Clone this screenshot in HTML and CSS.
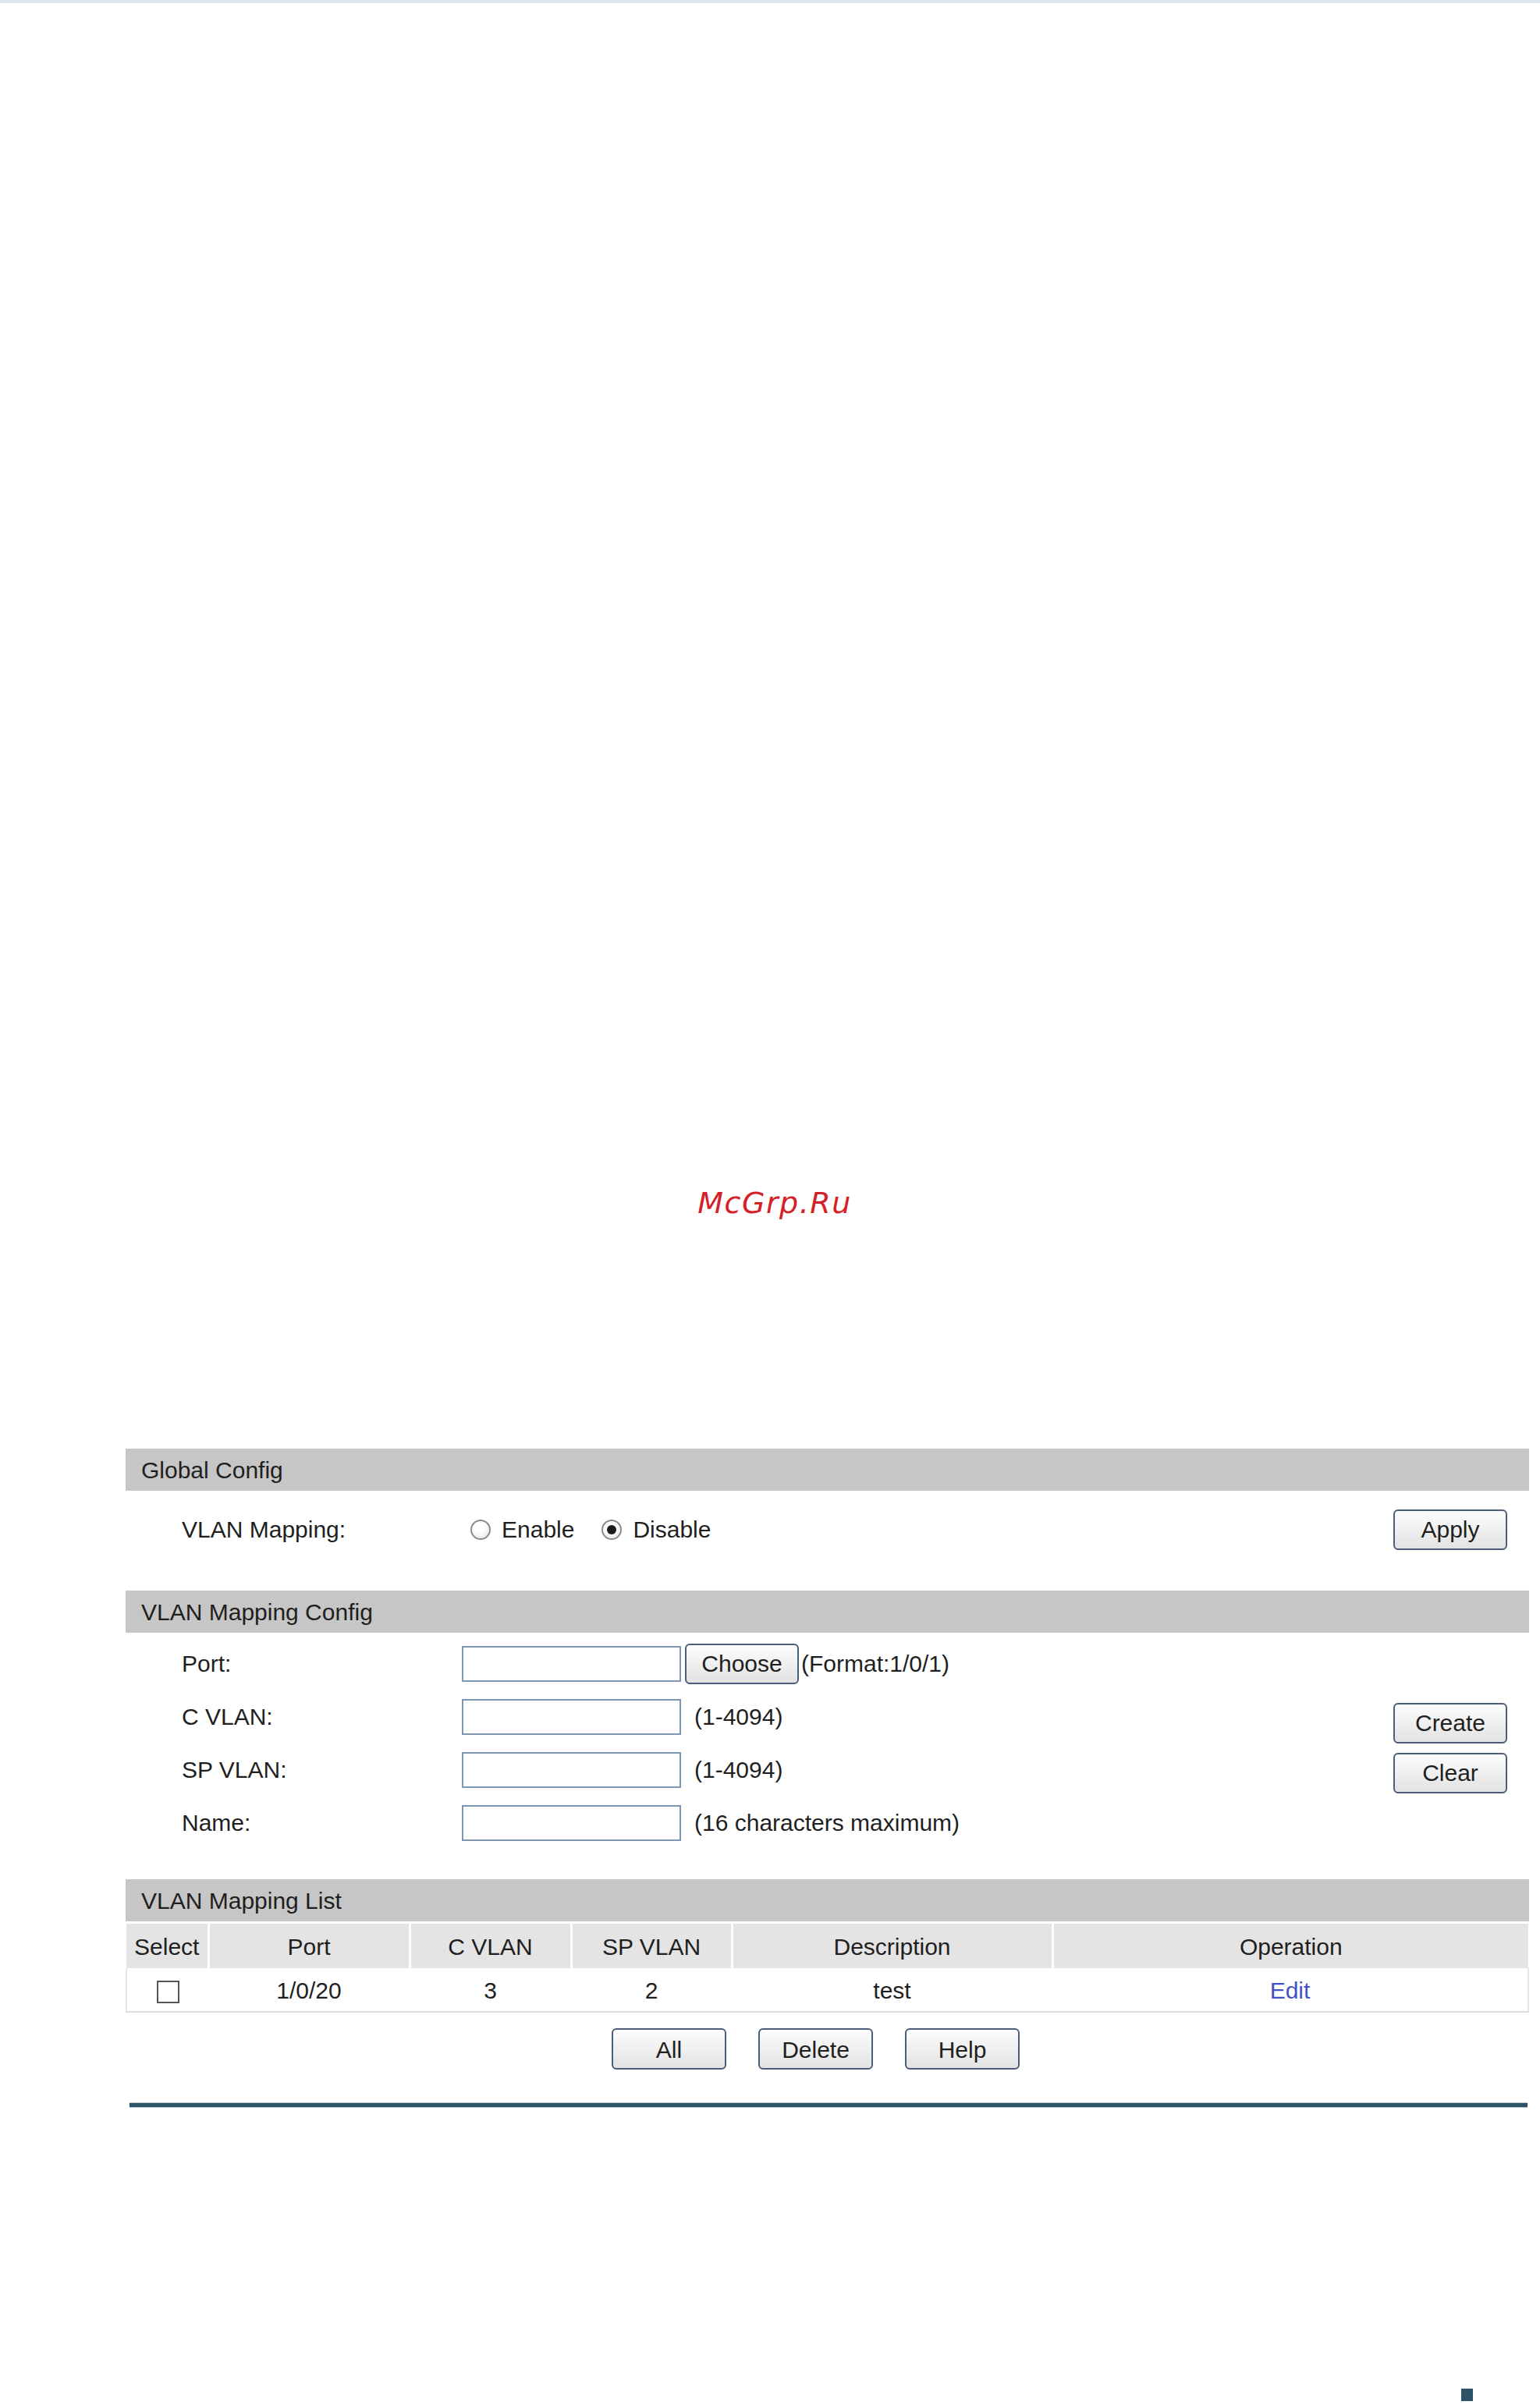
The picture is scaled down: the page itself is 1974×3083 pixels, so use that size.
FILE: index.html
```html
<!DOCTYPE html>
<html lang="en">

<head>
    <meta charset="UTF-8">
    <title>VLAN Mapping</title>
    <link rel="stylesheet" href="styles.css">
</head>

<body>

    <div class="top-line"></div>

    <div class="watermark">McGrp.Ru</div>

    <div class="panel">

        <!-- Global Config -->
        <div class="sec-head">Global Config</div>
        <div class="global-body">
            <div class="field-row">
                <span class="label">VLAN Mapping:</span>
                <span class="radio"></span><span class="radio-text">Enable</span>
                <span class="radio checked"></span><span class="radio-text">Disable</span>
                <button class="btn push-right">Apply</button>
            </div>
        </div>

        <!-- VLAN Mapping Config -->
        <div class="sec-head">VLAN Mapping Config</div>
        <div class="cfg-body">
            <div class="cfg-rows">
                <div class="field-row">
                    <span class="label">Port:</span>
                    <input class="text-in" type="text">
                    <button class="btn choose">Choose</button>
                    <span class="hint tight">(Format:1/0/1)</span>
                </div>
                <div class="field-row">
                    <span class="label">C VLAN:</span>
                    <input class="text-in" type="text">
                    <span class="hint">(1-4094)</span>
                </div>
                <div class="field-row">
                    <span class="label">SP VLAN:</span>
                    <input class="text-in" type="text">
                    <span class="hint">(1-4094)</span>
                </div>
                <div class="field-row">
                    <span class="label">Name:</span>
                    <input class="text-in" type="text">
                    <span class="hint">(16 characters maximum)</span>
                </div>
            </div>
            <div class="cfg-actions">
                <button class="btn">Create</button>
                <button class="btn">Clear</button>
            </div>
        </div>

        <!-- VLAN Mapping List -->
        <div class="sec-head">VLAN Mapping List</div>
        <table class="map-table">
            <colgroup>
                <col style="width:105px">
                <col style="width:258px">
                <col style="width:207px">
                <col style="width:206px">
                <col style="width:411px">
                <col>
            </colgroup>
            <thead>
                <tr>
                    <th>Select</th>
                    <th>Port</th>
                    <th>C VLAN</th>
                    <th>SP VLAN</th>
                    <th>Description</th>
                    <th>Operation</th>
                </tr>
            </thead>
            <tbody>
                <tr>
                    <td><span class="check"></span></td>
                    <td>1/0/20</td>
                    <td>3</td>
                    <td>2</td>
                    <td>test</td>
                    <td><a class="edit" href="#">Edit</a></td>
                </tr>
            </tbody>
        </table>

        <div class="list-actions">
            <button class="btn">All</button>
            <button class="btn">Delete</button>
            <button class="btn">Help</button>
        </div>

        <div class="rule"></div>

    </div>

    <div class="page-mark"></div>

</body>

</html>
```

FILE: styles.css
```css
:root {
    --text: #1f1f1f;
    --bar: #c6c6c6;
    --thead: #e4e4e4;
    --btn-border: #4b5d78;
    --input-border: #7f96b2;
    --rule: #2c5366;
    --rule-edge: #b8c8d4;
    --link: #4152c4;
}

* {
    box-sizing: border-box;
}

body {
    margin: 0;
    background: #fff;
    color: var(--text);
    font-family: "Liberation Sans", Arial, sans-serif;
    font-size: 30px;
}

.top-line {
    height: 4px;
    background: #dbe5ec;
}

.watermark {
    margin-top: 1515px;
    padding-left: 12px;
    text-align: center;
    font-family: "DejaVu Sans", sans-serif;
    font-style: oblique;
    font-size: 38px;
    line-height: 46px;
    letter-spacing: 1.5px;
    color: #d42027;
}

.panel {
    width: 1799px;
    margin: 292px 0 0 161px;
}

.sec-head {
    height: 54px;
    line-height: 56px;
    padding-left: 20px;
    background: var(--bar);
}

.global-body {
    padding: 24px 28px 52px 72px;
}

.field-row {
    display: flex;
    align-items: center;
    height: 52px;
    padding-top: 3px;
}

.global-body .field-row {
    padding-top: 0;
}

.label {
    width: 359px;
    flex-shrink: 0;
}

.global-body .label {
    width: 370px;
}

.radio {
    width: 26px;
    height: 26px;
    border: 2px solid #8c8c8c;
    border-radius: 50%;
    background: radial-gradient(circle at 40% 35%, #fff 30%, #e6e6e6 100%);
    position: relative;
    flex-shrink: 0;
}

.radio.checked::after {
    content: "";
    position: absolute;
    left: 5px;
    top: 5px;
    width: 12px;
    height: 12px;
    border-radius: 50%;
    background: #1c1c1c;
}

.radio-text {
    margin: 0 35px 0 14px;
}

.btn {
    width: 146px;
    height: 52px;
    padding: 0;
    border: 2px solid var(--btn-border);
    border-radius: 6px;
    background: linear-gradient(#fdfdfd, #e2e2e2);
    font-family: "Liberation Sans", Arial, sans-serif;
    font-size: 30px;
    color: var(--text);
}

.push-right {
    margin-left: auto;
}

.cfg-body {
    display: grid;
    grid-template-columns: 1fr auto;
    padding: 12px 28px 48px 72px;
}

.cfg-rows {
    display: flex;
    flex-direction: column;
    gap: 16px;
}

.text-in {
    width: 281px;
    height: 46px;
    border: 2px solid var(--input-border);
    background: #fff;
    flex-shrink: 0;
}

.choose {
    margin-left: 5px;
}

.hint {
    margin-left: 17px;
}

.hint.tight {
    margin-left: 3px;
}

.cfg-actions {
    display: flex;
    flex-direction: column;
    gap: 12px;
    padding-top: 78px;
}

.map-table {
    width: 100%;
    margin-top: 3px;
    border-collapse: collapse;
    table-layout: fixed;
}

.map-table th {
    height: 57px;
    padding: 2px 0 0;
    background: var(--thead);
    font-weight: normal;
    border-left: 3px solid #fff;
}

.map-table th:first-child {
    border-left: 0;
}

.map-table td {
    height: 56px;
    padding: 2px 0 0;
    text-align: center;
    border-bottom: 2px solid #dedede;
}

.map-table td:first-child {
    border-left: 2px solid #e6e6e6;
}

.map-table td:last-child {
    border-right: 2px solid #e6e6e6;
}

.check {
    display: inline-block;
    width: 29px;
    height: 29px;
    border: 2px solid #555;
    background: #fff;
    vertical-align: middle;
}

.edit {
    color: var(--link);
    text-decoration: none;
}

.list-actions {
    display: flex;
    gap: 41px;
    margin-top: 20px;
    padding-left: 623px;
}

.list-actions .btn {
    width: 147px;
    height: 53px;
    padding-top: 3px;
}

.rule {
    height: 7px;
    margin: 42px 2px 0 5px;
    border-top: 1px solid var(--rule-edge);
    border-bottom: 1px solid var(--rule-edge);
    background: var(--rule);
}

.page-mark {
    width: 15px;
    height: 16px;
    margin: 360px 0 0 1873px;
    background: var(--rule);
}
```
